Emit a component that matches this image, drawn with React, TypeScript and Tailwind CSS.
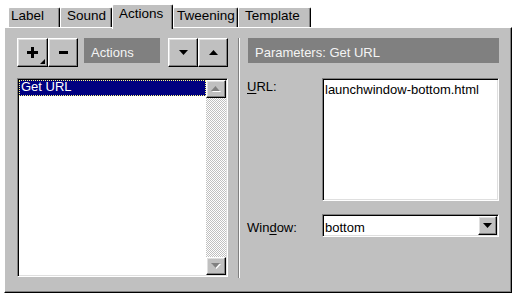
import React from "react";

const raised =
  "bg-[#c0c0c0] border border-t-white border-l-white border-r-black border-b-black shadow-[inset_-1px_-1px_0_#808080,inset_1px_1px_0_#dfdfdf] flex items-center justify-center relative";
const sunken =
  "border border-t-[#808080] border-l-[#808080] border-r-white border-b-white shadow-[inset_1px_1px_0_#000000,inset_-1px_-1px_0_#dfdfdf]";

function Tri({ dir, color = "#000" }: { dir: "up" | "down"; color?: string }) {
  return (
    <svg width="9" height="5" viewBox="0 0 9 5" className="block">
      {dir === "down" ? (
        <polygon points="0,0 9,0 4.5,5" fill={color} />
      ) : (
        <polygon points="4.5,0 9,5 0,5" fill={color} />
      )}
    </svg>
  );
}

function DisTri({ dir }: { dir: "up" | "down" }) {
  return (
    <svg width="10" height="6" viewBox="0 0 10 6" className="block">
      {dir === "down" ? (
        <>
          <polygon points="1,1 10,1 5.5,6" fill="#ffffff" />
          <polygon points="0,0 9,0 4.5,5" fill="#808080" />
        </>
      ) : (
        <>
          <polygon points="5.5,1 10,6 1,6" fill="#ffffff" />
          <polygon points="4.5,0 9,5 0,5" fill="#808080" />
        </>
      )}
    </svg>
  );
}

export default function App() {
  return (
    <div className="w-[516px] h-[297px] bg-white font-['Liberation_Sans',Arial,sans-serif] text-black text-[13px] leading-[15px] overflow-hidden">
      {/* Tabs */}
      <div className="flex items-end h-[27px] pl-[8px]">
        <div className="w-[52px] h-[20px] bg-[#c0c0c0] border-l border-t border-r border-l-white border-t-white border-r-black shadow-[inset_-1px_0_0_#808080] rounded-t-[2px] text-[13.5px] leading-[16px] pl-[2px]">
          Label
        </div>
        <div className="w-[52px] h-[20px] bg-[#c0c0c0] border-l border-t border-r border-l-white border-t-white border-r-black shadow-[inset_-1px_0_0_#808080] rounded-t-[2px] text-[13.5px] leading-[16px] pl-[6px]">
          Sound
        </div>
        <div className="relative z-10 -mb-[2px] w-[61px] h-[25px] bg-[#c0c0c0] border-l border-t border-r border-l-white border-t-white border-r-black shadow-[inset_-1px_0_0_#808080] rounded-t-[2px] text-[13.5px] leading-[16px] pl-[6px] pt-[1px]">
          Actions
        </div>
        <div className="w-[65px] h-[20px] bg-[#c0c0c0] border-l border-t border-r border-l-white border-t-white border-r-black shadow-[inset_-1px_0_0_#808080] rounded-t-[2px] text-[13.5px] leading-[16px] pl-[3px]">
          Tweening
        </div>
        <div className="w-[73px] h-[20px] bg-[#c0c0c0] border-l border-t border-r border-l-white border-t-white border-r-black shadow-[inset_-1px_0_0_#808080] rounded-t-[2px] text-[13.5px] leading-[16px] pl-[6px]">
          Template
        </div>
      </div>

      {/* Panel */}
      <div className="ml-[4px] w-[508px] h-[266px] bg-[#c0c0c0] border border-t-white border-l-white border-r-black border-b-black shadow-[inset_-1px_-1px_0_#808080] flex items-start pt-[10px] pl-[12px]">
        {/* Left column */}
        <div className="w-[211px] flex flex-col">
          <div className="flex items-start h-[29px]">
            <div className={`${raised} w-[31px] h-[29px]`}>
              <svg width="11" height="11" viewBox="0 0 11 11" className="block">
                <rect x="0" y="4" width="11" height="3" fill="#000" />
                <rect x="4" y="0" width="3" height="11" fill="#000" />
              </svg>
              <svg width="5" height="5" viewBox="0 0 5 5" className="absolute right-[2px] bottom-[2px]">
                <polygon points="5,0 5,5 0,5" fill="#000" />
              </svg>
            </div>
            <div className={`${raised} w-[30px] h-[29px]`}>
              <svg width="9" height="3" viewBox="0 0 9 3" className="block">
                <rect x="0" y="0" width="9" height="3" fill="#000" />
              </svg>
            </div>
            <div className="ml-[6px] w-[76px] h-[25px] bg-[#808080] text-[#f4f4f4] pl-[7px] pt-[7px]">
              Actions
            </div>
            <div className={`${raised} ml-[8px] w-[30px] h-[29px]`}>
              <Tri dir="down" />
            </div>
            <div className={`${raised} w-[30px] h-[29px]`}>
              <Tri dir="up" />
            </div>
          </div>

          {/* Listbox */}
          <div className={`${sunken} mt-[11px] h-[199px] bg-white p-[1px] flex`}>
            <div className="flex-1">
              <div className="h-[16px] bg-[#000080] text-white leading-[14px] pl-[2px] outline outline-1 outline-dotted outline-[#ffff80] -outline-offset-1">
                Get URL
              </div>
            </div>
            <div className="w-[20px] flex flex-col">
              <div className={`${raised} h-[18px]`}>
                <DisTri dir="up" />
              </div>
              <div className="flex-1 bg-[repeating-conic-gradient(#ffffff_0%_25%,#c0c0c0_0%_50%)] bg-[length:2px_2px]" />
              <div className={`${raised} h-[18px]`}>
                <DisTri dir="down" />
              </div>
            </div>
          </div>
        </div>

        {/* Separator */}
        <div className="ml-[10px] w-[2px] h-[240px] border-l border-l-[#808080] border-r border-r-white" />

        {/* Right column */}
        <div className="ml-[7px] w-[252px] flex flex-col">
          <div className="ml-[1px] w-[251px] h-[25px] bg-[#808080] text-[#f4f4f4] pl-[7px] pt-[7px]">
            Parameters: Get URL
          </div>
          <div className="flex items-start mt-[15px]">
            <div className="w-[75px] mt-[1px]">
              <span className="underline underline-offset-2">U</span>RL:
            </div>
            <div className={`${sunken} w-[177px] h-[123px] bg-white pl-[2px] pt-[3px]`}>
              launchwindow-bottom.html
            </div>
          </div>
          <div className="flex items-start mt-[13px]">
            <div className="w-[75px] mt-[6px]">
              Win<span className="underline underline-offset-2">d</span>ow:
            </div>
            <div className={`${sunken} w-[177px] h-[23px] bg-white p-[1px] flex items-start`}>
              <span className="flex-1 pl-[1px] pt-[4px]">bottom</span>
              <div className={`${raised} w-[19px] h-[19px]`}>
                <Tri dir="down" />
              </div>
            </div>
          </div>
        </div>
      </div>
    </div>
  );
}
